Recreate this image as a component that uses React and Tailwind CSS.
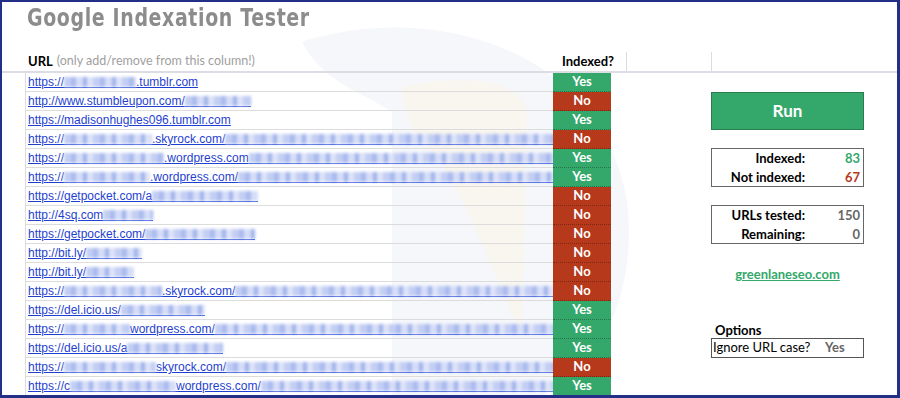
import React from "react";

const GREEN = "bg-[#34a86a]";
const RED = "bg-[#b5391a]";

// each url: list of parts, strings are text, numbers are blurred widths, "fill" blurs to the column end
const rows = [
  { url: ["https://", 72, ".tumblr.com"], ok: true },
  { url: ["http://www.stumbleupon.com/", 66], ok: false },
  { url: ["https://madisonhughes096.tumblr.com"], ok: true },
  { url: ["https://", 88, ".skyrock.com/", "fill"], ok: false },
  { url: ["https://", 100, ".wordpress.com", "fill"], ok: true },
  { url: ["https://", 86, ".wordpress.com/", "fill"], ok: true },
  { url: ["https://getpocket.com/a", 106], ok: false },
  { url: ["http://4sq.com", 50], ok: false },
  { url: ["https://getpocket.com/", 110], ok: false },
  { url: ["http://bit.ly/", 56], ok: false },
  { url: ["http://bit.ly/", 48], ok: false },
  { url: ["https://", 98, ".skyrock.com/", "fill"], ok: false },
  { url: ["https://del.icio.us/", 84], ok: true },
  { url: ["https://", 66, "wordpress.com/", "fill"], ok: true },
  { url: ["https://del.icio.us/a", 96], ok: true },
  { url: ["https://", 92, "skyrock.com/", "fill"], ok: false },
  { url: ["https://c", 106, "wordpress.com/", "fill"], ok: true },
];

function Blur({ w }) {
  return (
    <span className="inline-flex flex-col align-[-1px]" style={{ width: w === "fill" ? 420 : w }}>
      <span className="h-[10px] blur-[1.4px] bg-[repeating-linear-gradient(90deg,#c3cef3_0_7px,#a9baee_7px_12px,#d6ddf7_12px_19px,#9fb2eb_19px_23px,#dde3f8_23px_29px)]" />
      <span className="h-px bg-[#2b4fd6]" />
    </span>
  );
}

function UrlCell({ parts }) {
  return (
    <div className="w-[527px] h-full border-b border-[#dcdcdc] pl-[2px] flex items-center overflow-hidden whitespace-nowrap">
      <a className="text-[12px] leading-none text-[#1f3fd0] underline underline-offset-[1px] font-['Liberation_Sans',Arial,sans-serif] flex items-center">
        {parts.map((p, i) =>
          typeof p === "string" && p !== "fill" ? <span key={i}>{p}</span> : <Blur key={i} w={p} />
        )}
      </a>
    </div>
  );
}

function StatRow({ label, value, color }) {
  return (
    <div className="flex h-[19px] items-center">
      <span className="w-[93px] text-right">{label}</span>
      <span className={`flex-1 text-right pr-[3px] ${color}`}>{value}</span>
    </div>
  );
}

export default function App() {
  return (
    <div className="w-[900px] h-[398px] border-l-2 border-t-2 border-r-[3px] border-b-[3px] border-[#232f86] bg-white relative overflow-hidden font-['Lato',sans-serif]">
      {/* faint logo watermark behind the sheet */}
      <svg className="absolute left-0 top-0 pointer-events-none" width="900" height="398">
        <path d="M300 40 C 420 0, 600 40, 625 200 C 640 330, 560 398, 520 398 L 390 398 L 390 110 C 360 90, 320 80, 300 40 Z" fill="#f1f3f9" opacity="0.7" />
        <path d="M400 85 C 470 70, 520 80, 525 110 L 520 330 C 500 300, 470 200, 430 150 C 410 130, 400 110, 400 85 Z" fill="#fcf5e8" opacity="0.6" />
      </svg>

      <div className="relative">
        <div className="h-[50px] pl-[25px] pt-[3px]">
          <h1 className="text-[24px] font-bold text-[#8c8c8c] tracking-[0.8px] leading-[26px] font-['DejaVu_Sans',sans-serif] scale-x-[0.79] origin-left whitespace-nowrap">
            Google Indexation Tester
          </h1>
        </div>

        {/* header row */}
        <div className="flex h-[21px] border-b-2 border-[#dcdce4] text-[13px] leading-none">
          <div className="w-[23px]" />
          <div className="w-[527px] pl-[3px] flex items-center">
            <span className="font-bold text-black">URL</span>
            <span className="text-[#a0a0a0] ml-[4px] text-[12.5px]">(only add/remove from this column!)</span>
          </div>
          <div className="w-[74px] pl-[10px] flex items-center font-bold text-black">Indexed?</div>
          <div className="w-[85px] border-l border-[#dcdcdc]" />
          <div className="flex-1 border-l border-[#dcdcdc]" />
        </div>

        {/* body */}
        <div className="flex">
          <div className="w-[23px]" />
          <div className="border-l border-[#dcdcdc]">
            {rows.map((r, i) => (
              <div key={i} className="flex h-[19px]">
                <UrlCell parts={r.url} />
                <div
                  className={`w-[58px] h-full flex items-center justify-center text-white font-bold text-[13px] border-b border-dotted border-black/30 ${r.ok ? GREEN : RED}`}
                >
                  {r.ok ? "Yes" : "No"}
                </div>
              </div>
            ))}
          </div>

          <div className="ml-[100px] w-[153px] text-[13px] font-bold text-black">
            <button className={`mt-[19px] w-full h-[38px] ${GREEN} border border-[#2a7d50] text-white text-[17px] font-bold`}>
              Run
            </button>

            <div className="mt-[18px] h-[39px] border border-[#666]">
              <StatRow label="Indexed:" value="83" color="text-[#34a86a]" />
              <StatRow label="Not indexed:" value="67" color="text-[#b5391a]" />
            </div>

            <div className="mt-[18px] h-[39px] border border-[#666]">
              <StatRow label="URLs tested:" value="150" color="text-[#666]" />
              <StatRow label="Remaining:" value="0" color="text-[#666]" />
            </div>

            <div className="mt-[21px] text-center">
              <a className="text-[#34a86a] underline">greenlaneseo.com</a>
            </div>

            <div className="mt-[36px] pl-[4px] h-[17px]">Options</div>
            <div className="h-[20px] border border-[#555] flex items-center">
              <span className="font-normal pl-[1px] w-[113px]">Ignore URL case?</span>
              <span className="text-[#666]">Yes</span>
            </div>
          </div>
        </div>
      </div>
    </div>
  );
}
